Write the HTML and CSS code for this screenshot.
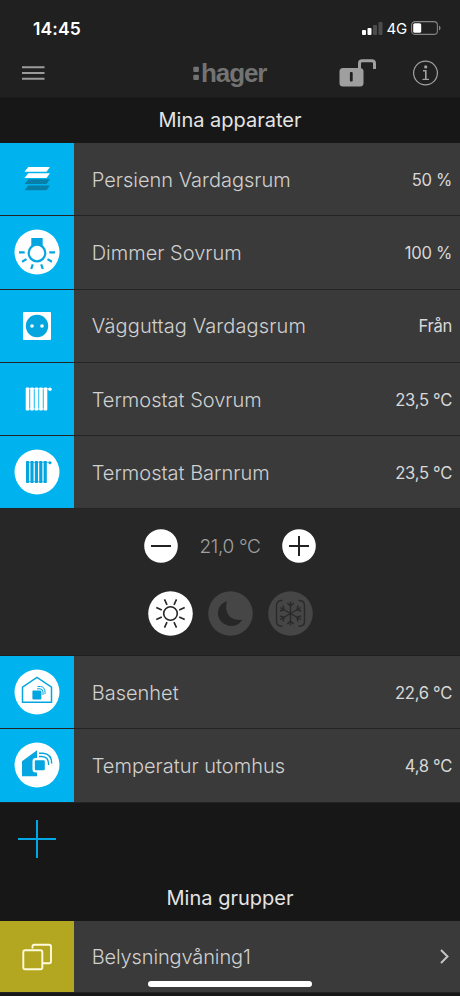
FILE: index.html
```html
<!DOCTYPE html>
<html lang="sv">
<head>
<meta charset="utf-8">
<title>hager</title>
<link rel="stylesheet" href="styles.css">
</head>
<body>
<div class="screen">
  <div class="status">
    <span class="time">14:45</span>
    <div class="status-right">
      <svg class="signal" width="21" height="13" viewBox="0 0 21 13"><rect x="0" y="8" width="4" height="5" rx="1" fill="#fff"/><rect x="5.500" y="6" width="4" height="7" rx="1" fill="#fff"/><rect x="11" y="3" width="4" height="10" rx="1" fill="#4c4c4c"/><rect x="16.500" y="0" width="4" height="13" rx="1" fill="#4c4c4c"/></svg>
      <span class="net">4G</span>
      <svg class="battery" width="30" height="14" viewBox="0 0 30 14"><rect x=".6" y=".6" width="25.800" height="12.800" rx="3.500" fill="none" stroke="#858585" stroke-width="1.100"/><rect x="2.200" y="2.200" width="8" height="9.600" rx="1.600" fill="#fff"/><path d="M28 4.500q1.600 .8 1.600 2.500t-1.600 2.500z" fill="#858585"/></svg>
    </div>
  </div>
  <header class="bar">
    <svg class="menu" width="23" height="14" viewBox="0 0 23 14"><path d="M0 1.200H22.500M0 7H22.500M0 12.800H22.500" stroke="#9b9b9b" stroke-width="2.100"/></svg>
    <div class="logo"><svg width="7" height="15" viewBox="0 0 7 15"><rect x=".3" y=".8" width="5.600" height="5.200" rx="1"/><rect x=".3" y="8.800" width="5.600" height="5.200" rx="1"/></svg><span>hager</span></div>
    <svg class="lock" width="38" height="28" viewBox="0 0 38 28"><rect x=".5" y="9" width="24" height="18.500" rx="3.500" fill="#9f9f9f"/><path d="M20.500 9V4.500q0-2.700 2.700-2.700h9.600q2.700 0 2.700 2.700V10" fill="none" stroke="#9f9f9f" stroke-width="3"/><rect x="10.900" y="13" width="2.800" height="9.500" rx="1" fill="#202020"/></svg>
    <svg class="info" width="26" height="26" viewBox="0 0 26 26" fill="none" stroke="#a2a2a2"><circle cx="12.500" cy="13" r="11.900" stroke-width="1.200"/><circle cx="12.700" cy="6.900" r="1.600" fill="#a2a2a2" stroke="none"/><path d="M10 10.800H12.800V19" stroke-width="1.600"/><path d="M9.500 19.400H16" stroke-width="1.200"/></svg>
  </header>

  <h2 class="title">Mina apparater</h2>
  <div class="row">
    <div class="tile"><svg class="icon" viewBox="-24 -24 48 48"><g fill="#fff"><path d="M-8.700-12H13L9.500-7.300H-12.500z"/><path d="M-8.700-5.800H13L9.500-1.100H-12.500z"/></g><g fill="#087fa8"><path d="M-8.700 .3H13L9.500 5H-12.500z"/><path d="M-8.700 6.500H13L9.500 11.200H-12.500z"/></g></svg></div>
    <span class="name">Persienn Vardagsrum</span><span class="value">50 %</span>
  </div>
  <div class="row">
    <div class="tile"><svg class="icon" viewBox="-24 -24 48 48"><circle r="22.500" fill="#fff"/><rect x="-5.700" y="-14" width="11.400" height="9" fill="#05a6df"/><circle cy="1" r="8.300" fill="#fff" stroke="#05a6df" stroke-width="2.200"/><path d="M-18 .3H-12.300M18 .3H12.300M-14.900 9.700L-10.500 7.100M14.900 9.700L10.500 7.100M-5.800 17L-4.200 12.400M5.800 17L4.200 12.400" stroke="#05a6df" stroke-width="2.200"/></svg></div>
    <span class="name">Dimmer Sovrum</span><span class="value">100 %</span>
  </div>
  <div class="row">
    <div class="tile"><svg class="icon" viewBox="-24 -24 48 48"><rect x="-14" y="-14" width="28" height="28" rx="1" fill="#fff"/><circle r="11.200" fill="#05a6df"/><circle cx="-5" r="1.800" fill="#fff"/><circle cx="5" r="1.800" fill="#fff"/></svg></div>
    <span class="name wide">Vägguttag Vardagsrum</span><span class="value">Från</span>
  </div>
  <div class="row">
    <div class="tile"><svg class="icon" viewBox="-24 -24 48 48"><g fill="#fff"><rect x="-11.300" y="-11.500" width="3.600" height="23" rx="1"/><rect x="-6.800" y="-11.500" width="3.600" height="23" rx="1"/><rect x="-2.300" y="-11.500" width="3.600" height="23" rx="1"/><rect x="2.200" y="-11.500" width="3.600" height="23" rx="1"/><rect x="6.700" y="-11.500" width="3.600" height="23" rx="1"/><circle cx="13" cy="-9.700" r="1.700"/><path d="M-10-10.200H13M-10 10H9" stroke="#fff" stroke-width=".8"/></g></svg></div>
    <span class="name">Termostat Sovrum</span><span class="value">23,5 °C</span>
  </div>
  <div class="row">
    <div class="tile"><svg class="icon" viewBox="-24 -24 48 48"><circle r="22.500" fill="#fff"/><g fill="#05a6df"><rect x="-11" y="-11" width="3.200" height="22" rx=".8"/><rect x="-6.600" y="-11" width="3.200" height="22" rx=".8"/><rect x="-2.200" y="-11" width="3.200" height="22" rx=".8"/><rect x="2.200" y="-11" width="3.200" height="22" rx=".8"/><rect x="6.600" y="-11" width="3.200" height="22" rx=".8"/><circle cx="13" cy="-9.200" r="1.500"/><path d="M-10-9.700H12M-10 9.700H9" stroke="#05a6df" stroke-width=".7"/></g></svg></div>
    <span class="name">Termostat Barnrum</span><span class="value">23,5 °C</span>
  </div>

  <div class="panel">
    <div class="setpoint">
      <svg width="34" height="34" viewBox="-17 -17 34 34"><circle r="16.800" fill="#fff"/><path d="M-10 0H10" stroke="#222" stroke-width="2"/></svg>
      <span class="temp">21,0 °C</span>
      <svg width="34" height="34" viewBox="-17 -17 34 34"><circle r="16.800" fill="#fff"/><path d="M-10 0H10M0-10V10" stroke="#222" stroke-width="2"/></svg>
    </div>
    <div class="modes">
      <svg width="45" height="45" viewBox="-22.500 -22.500 45 45"><circle r="22.300" fill="#fff"/><g stroke="#262626" stroke-width="1.600" fill="none"><circle r="6.800"/><path d="M-3.500-8.700L-6-14.200M3.500-8.700L6-14.200M-3.500 8.700L-6 14.200M3.500 8.700L6 14.200M-8.700-3.500L-14.200-6M-8.700 3.500L-14.200 6M8.700-3.500L14.200-6M8.700 3.500L14.200 6"/></g></svg>
      <svg width="45" height="45" viewBox="-22.500 -22.500 45 45"><circle r="22.300" fill="#464646"/><path d="M-3.500-12.200C-7 .5 1 8 11.800 6.200C8 12.500 1 13.500-4 11.500C-11 8.800-14 2-12-4C-10.700-8.500-7.500-11-3.500-12.200z" fill="#272727"/></svg>
      <svg width="45" height="45" viewBox="-22.500 -22.500 45 45"><circle r="22.300" fill="#464646"/><g fill="none" stroke="#2a2a2a" stroke-width="1.400"><path d="M-8-13H-9.500Q-14-12.500-14-8V8Q-14 12-9.500 12.700H-8M8-13H9.500Q14-12.500 14-8V8Q14 12 9.500 12.700H8"/>
        <g id="arm"><path d="M0 0V-12M-3.200-10.500L0-7.500L3.200-10.500"/></g><use href="#arm" transform="rotate(60)"/><use href="#arm" transform="rotate(120)"/><use href="#arm" transform="rotate(180)"/><use href="#arm" transform="rotate(240)"/><use href="#arm" transform="rotate(300)"/></g></svg>
    </div>
  </div>

  <div class="row">
    <div class="tile"><svg class="icon" viewBox="-24 -24 48 48"><circle r="22.500" fill="#fff"/><path d="M-14.500 10.200V-4.800L0-14.500L14.500-4.800V10.200z" fill="none" stroke="#05a6df" stroke-width="1.500"/><rect x="-4.600" y="-1.600" width="9" height="9" rx="1" fill="#05a6df"/><path d="M0-3.200H3Q6-3.200 6 0V3M.5-5.500H3.500Q8-5 8 0V2" fill="none" stroke="#05a6df" stroke-width="1"/></svg></div>
    <span class="name">Basenhet</span><span class="value">22,6 °C</span>
  </div>
  <div class="row">
    <div class="tile"><svg class="icon" viewBox="-24 -24 48 48"><circle r="22.500" fill="#fff"/><path d="M0-14.800V11.200H-15V-3.800z" fill="#05a6df"/><rect x="-3.200" y="-5.700" width="11.500" height="12" rx="2" fill="#fff" stroke="#fff" stroke-width="2.600"/><rect x="-2.200" y="-4.700" width="10" height="10" rx="1.200" fill="#05a6df"/><path d="M2-8.500H5Q11.500-8 11.500-1.500V0M2-11.700H6Q14.700-11 14.700-1.500" fill="none" stroke="#05a6df" stroke-width="1.400"/></svg></div>
    <span class="name">Temperatur utomhus</span><span class="value">4,8 °C</span>
  </div>

  <div class="add"><svg width="38" height="38" viewBox="-19 -19 38 38"><path d="M-19 0H19M0-19V19" stroke="#00a9e6" stroke-width="2"/></svg></div>
  <h2 class="title groups">Mina grupper</h2>
  <div class="row group">
    <div class="tile olive"><svg class="icon" viewBox="-24 -24 48 48"><g fill="none" stroke="#fffbdc" stroke-width="1.900"><rect x="-13.700" y="-6.700" width="19" height="19" rx="1.800"/><path d="M-4.500-8.500V-10.500Q-4.500-12.300-2.700-12.300H12.200Q14-12.300 14-10.500V4.500Q14 6.300 12.200 6.300H6"/></g></svg></div>
    <span class="name tight">Belysningvåning1</span>
    <svg class="chevron" width="9" height="15" viewBox="0 0 9 15"><path d="M1 1L7.500 7.500L1 14" fill="none" stroke="#c4c4c4" stroke-width="2"/></svg>
  </div>
  <div class="home"></div>
</div>
</body>
</html>
```
FILE: styles.css
```css
* { box-sizing: border-box; }
body { margin: 0; background: #171717; font-family: Inter, Roboto, sans-serif; }
.screen { position: relative; width: 460px; height: 996px; overflow: hidden; background: #171717; }
svg { display: block; flex: none; }
.status { height: 50px; padding: 6px 19px 0 33px; display: flex; align-items: center; justify-content: space-between; background: #202020; color: #fff; }
.time { font-size: 17.5px; font-weight: 600; letter-spacing: 0.1px; }
.status-right { display: flex; align-items: center; }
.net { margin: 0 4px; font-size: 15px; font-weight: 400; letter-spacing: -0.2px; }
.bar { height: 48px; padding: 0 21px 2px 22px; display: flex; align-items: center; background: #202020; border-bottom: 1px solid #1a1a1a; }
.logo { display: flex; align-items: center; margin-left: 148px; color: #737373; font-family: "Liberation Sans", Arial, sans-serif; font-size: 26px; font-weight: 700; line-height: 30px; letter-spacing: -1.1px; }
.logo svg { margin: 2px 1px 0 0; fill: #737373; }
.lock { margin-left: auto; }
.info { margin-left: 36px; }
.title { margin: 0; height: 45px; line-height: 45px; font-size: 20px; font-weight: 400; color: #e4e4e4; text-align: center; }
.row { height: 73.3px; display: flex; align-items: center; background: #3a3a3a; border-bottom: 1px solid #242424; padding-right: 8px; }
.tile { width: 73.5px; height: 100%; flex: none; display: flex; align-items: center; justify-content: center; background: #00b3ef; }
.olive { background: #b3a722; }
.icon { width: 48px; height: 48px; }
.name { margin-left: 18.2px; padding-top: 1px; font-size: 20px; font-weight: 300; color: #d0d0d0; white-space: nowrap; }
.wide { letter-spacing: 0.12px; }
.tight { letter-spacing: -0.13px; }
.value { margin-left: auto; padding-top: 1px; font-size: 16.6px; font-weight: 400; letter-spacing: -0.3px; color: #d8d8d8; white-space: nowrap; }
.panel { height: 146.5px; background: #272727; border-bottom: 1px solid #1e1e1e; padding-top: 20px; }
.setpoint { display: flex; justify-content: center; align-items: center; gap: 21px; height: 34px; }
.temp { width: 62px; text-align: center; font-size: 19px; font-weight: 300; letter-spacing: -0.35px; color: #a0a0a0; white-space: nowrap; }
.modes { display: flex; justify-content: center; gap: 15px; margin-top: 28px; }
.add { height: 73px; padding-left: 18px; display: flex; align-items: center; }
.groups { height: 45.7px; line-height: 45px; }
.group { height: 72px; }
.chevron { margin: 0 3px 0 auto; }
.home { position: absolute; left: 148px; top: 981px; width: 164px; height: 6px; border-radius: 3px; background: #fff; }
```
